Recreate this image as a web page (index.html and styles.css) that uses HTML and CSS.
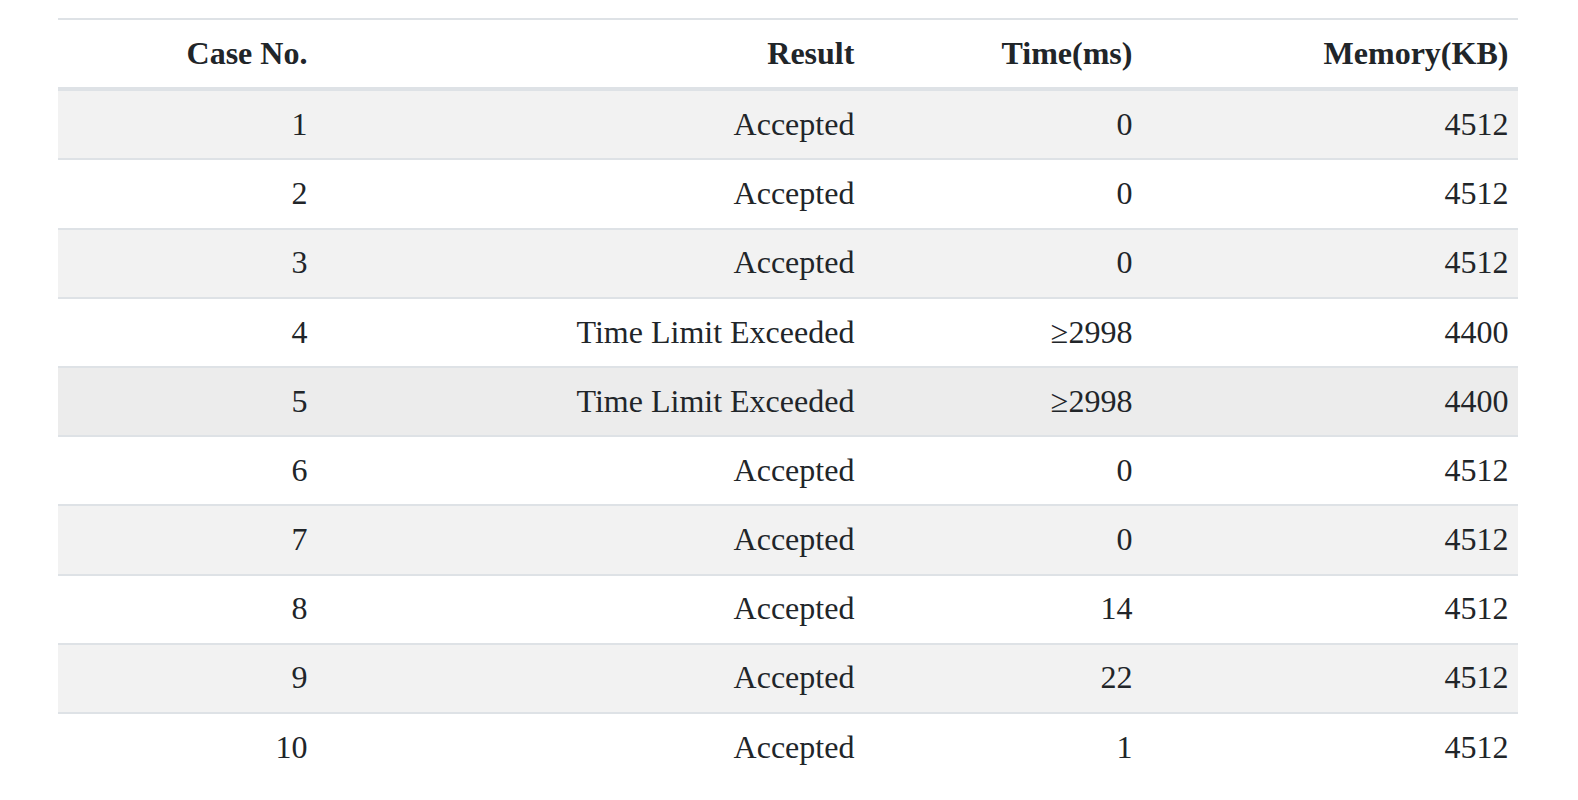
FILE: index.html
```html
<!DOCTYPE html>
<html>
<head>
<meta charset="utf-8">
<link rel="stylesheet" href="styles.css">
</head>
<body>
<div class="wrap">
<table class="cases">
<colgroup>
<col class="c1"><col class="c2"><col class="c3"><col class="c4">
</colgroup>
<thead>
<tr><th>Case No.</th><th>Result</th><th>Time(ms)</th><th>Memory(KB)</th></tr>
</thead>
<tbody>
<tr><td>1</td><td>Accepted</td><td>0</td><td>4512</td></tr>
<tr><td>2</td><td>Accepted</td><td>0</td><td>4512</td></tr>
<tr><td>3</td><td>Accepted</td><td>0</td><td>4512</td></tr>
<tr><td>4</td><td>Time Limit Exceeded</td><td>≥2998</td><td>4400</td></tr>
<tr class="hover"><td>5</td><td>Time Limit Exceeded</td><td>≥2998</td><td>4400</td></tr>
<tr><td>6</td><td>Accepted</td><td>0</td><td>4512</td></tr>
<tr><td>7</td><td>Accepted</td><td>0</td><td>4512</td></tr>
<tr><td>8</td><td>Accepted</td><td>14</td><td>4512</td></tr>
<tr><td>9</td><td>Accepted</td><td>22</td><td>4512</td></tr>
<tr><td>10</td><td>Accepted</td><td>1</td><td>4512</td></tr>
</tbody>
</table>
</div>
</body>
</html>
```
FILE: styles.css
```css
html, body {
  margin: 0;
  padding: 0;
  background: #fff;
}
.wrap {
  padding: 18px 0 0 58px;
}
.cases {
  width: 1460px;
  table-layout: fixed;
  border-collapse: collapse;
  font-family: "Liberation Serif", "Times New Roman", serif;
  font-size: 32px;
  line-height: 48px;
  color: #212529;
}
.c1 { width: 259px; }
.c2 { width: 547px; }
.c3 { width: 278px; }
.c4 { width: 376px; }
.cases th,
.cases td {
  text-align: right;
  padding: 8.8px 9.6px 10.4px;
  border-top: 2px solid #dee2e6;
  white-space: nowrap;
}
.cases th {
  font-weight: bold;
  border-bottom: 4px solid #dee2e6;
}
.cases tbody tr:first-child td {
  border-top: 0;
}
.cases tbody tr:nth-child(odd) {
  background: #f2f2f2;
}
.cases tbody tr.hover {
  background: #ececec;
}
```
